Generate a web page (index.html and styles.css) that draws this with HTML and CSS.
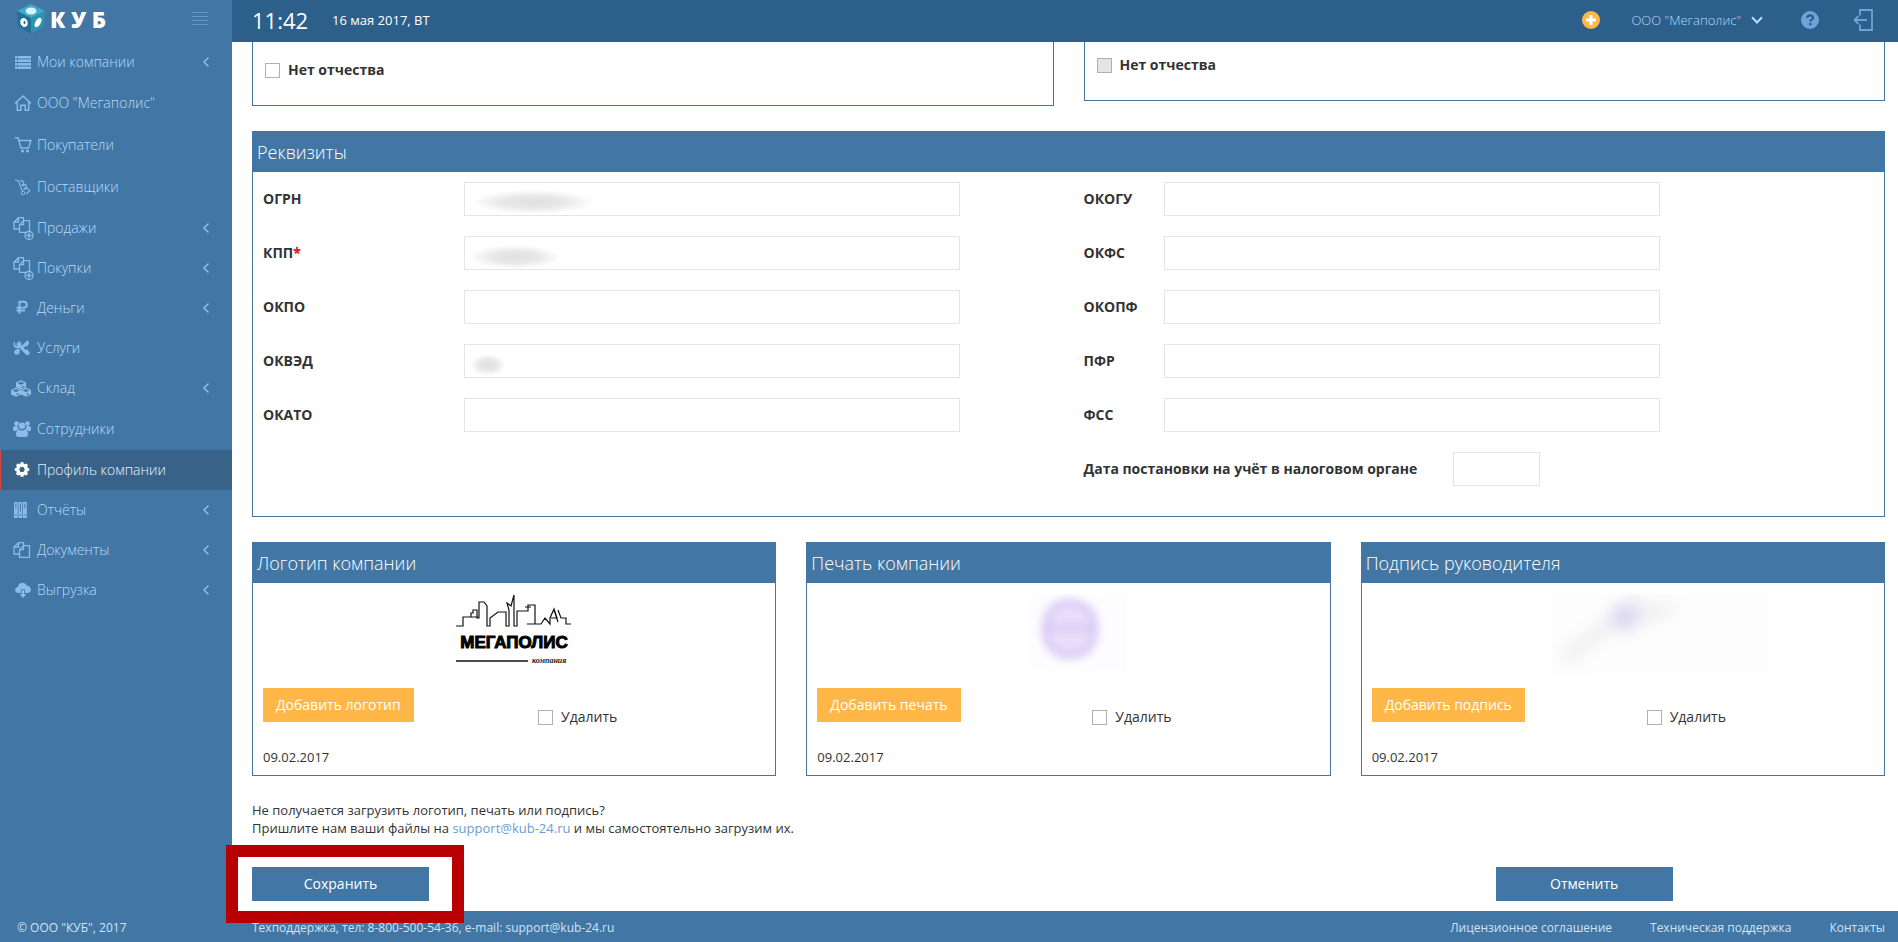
FILE: index.html
```html
<!DOCTYPE html>
<html lang="ru">
<head>
<meta charset="utf-8">
<title>КУБ — Профиль компании</title>
<link rel="stylesheet" href="styles.css">
</head>
<body>
<svg class="defs" aria-hidden="true">
  <symbol id="copy" viewBox="0 0 18 16"><path d="M5.500 4V.7h5V4M5.500.7 1 5v7h5M1 5h4.500V.7M10.500 3.700 6.500 7.700V15.300h10V3.700zM6.500 7.700h4V3.700" fill="none" stroke="currentColor" stroke-width="1.300"/></symbol>
  <symbol id="chev" viewBox="0 0 8 12"><path d="M6.500 1.500 2 6l4.500 4.500" fill="none" stroke="currentColor" stroke-width="1.600"/></symbol>
</svg>
<div class="page">
  <aside class="sidebar">
    <div class="brand">
      <svg class="cube" viewBox="0 0 28 30">
        <path d="M14 0 28 7 14 14 0 7z" fill="#3fa9c9"/><path d="M0 7l14 7v16L1 22z" fill="#226f94"/><path d="M28 7 14 14v16l13-8z" fill="#2d94ad"/>
        <ellipse cx="14" cy="7" rx="5.500" ry="3.500" fill="#d8f3fa"/><ellipse cx="7" cy="18.500" rx="3.600" ry="4.600" fill="#fff" transform="rotate(-20 7 18.500)"/><ellipse cx="7.500" cy="18.500" rx="1" ry="1.800" fill="#226f94"/><ellipse cx="21" cy="18.500" rx="2.600" ry="5.200" fill="#fff" transform="rotate(28 21 18.500)"/>
      </svg>
      <span class="brand-name">К У Б</span>
      <button class="burger" type="button" aria-label="Меню"><svg viewBox="0 0 16 14"><path d="M0 .5h16M0 4.500h16M0 8.500h16M0 12.500h16" stroke="currentColor"/></svg></button>
    </div>
    <nav class="menu">
      <a href="#"><svg viewBox="0 0 18 16"><path d="M2 2h2.500v2.500H2zM2 5.500h2.500V8H2zM2 9h2.500v2.500H2zM2 12.500h2.500V15H2zM5 2H18v2.500H5zM5 5.500H18V8H5zM5 9H18v2.500H5zM5 12.500H18V15H5z" fill="currentColor"/></svg><span>Мои компании</span><svg class="chev"><use href="#chev"/></svg></a>
      <a href="#" class="roomy"><svg viewBox="0 0 18 16"><path d="M2 8.500 10 1l8 7.500M4.300 7v8.300h3.500v-5h4.400v5h3.500V7" fill="none" stroke="currentColor" stroke-width="1.500"/></svg><span>ООО "Мегаполис"</span></a>
      <a href="#" class="roomy"><svg viewBox="0 0 18 16"><path d="M2 .8h3L8 11h7.500L18 3.500H6" fill="none" stroke="currentColor" stroke-width="1.400"/><circle cx="9.500" cy="14" r="1.600" fill="currentColor"/><circle cx="14.500" cy="14" r="1.600" fill="currentColor"/></svg><span>Покупатели</span></a>
      <a href="#" class="roomy"><svg viewBox="0 0 18 16"><path d="M2 .8l3.500 1.200L9.500 12.500M7 2.500l2.500-1 1.500 3.500-2.500 1M9.200 7l3.300-1.500 1.200 3-3 1.200M10.500 10.500l3.500-1.200 3 2.200-4 3.500" fill="none" stroke="currentColor" stroke-width="1.100"/><circle cx="10" cy="14" r="1.700" fill="none" stroke="currentColor"/></svg><span>Поставщики</span></a>
      <a href="#"><svg class="with-plus" viewBox="0 0 20 23"><use href="#copy" width="18" height="16"/><circle cx="16" cy="18.500" r="4" fill="#4276a4" stroke="currentColor" stroke-width="1.300"/><path d="M16 16v5M13.500 18.500h5" stroke="currentColor" stroke-width="1.500"/></svg><span>Продажи</span><svg class="chev"><use href="#chev"/></svg></a>
      <a href="#"><svg class="with-plus" viewBox="0 0 20 23"><use href="#copy" width="18" height="16"/><circle cx="16" cy="18.500" r="4" fill="#4276a4" stroke="currentColor" stroke-width="1.300"/><path d="M16 16v5M13.500 18.500h5" stroke="currentColor" stroke-width="1.500"/></svg><span>Покупки</span><svg class="chev"><use href="#chev"/></svg></a>
      <a href="#"><svg viewBox="0 0 18 16"><path d="M6.500 13.500V1.800h4c4.300 0 4.300 6 0 6H3.500M3.500 10.500h8.500" fill="none" stroke="currentColor" stroke-width="2"/></svg><span>Деньги</span><svg class="chev"><use href="#chev"/></svg></a>
      <a href="#"><svg viewBox="0 0 18 16"><path d="M5 4l8.500 9" stroke="currentColor" stroke-width="3" stroke-linecap="round"/><path d="M2 1.500v3.200l2 1.500 2.500-2L5.300 1a4 4 0 0 1 3 4.500L5.500 8A4 4 0 0 1 .5 3z" fill="currentColor"/><path d="M14.500 2 10 6.500M5.500 10 2.500 13" stroke="currentColor" stroke-width="2.600" stroke-linecap="round"/><circle cx="4" cy="12" r="2.600" fill="currentColor"/><path d="M11.500 4.500 14 1.200l2.300 1.700-2.500 4zM11 12l3-3 3 4-2.500 2.500z" fill="currentColor"/></svg><span>Услуги</span></a>
      <a href="#"><svg class="wide" viewBox="0 0 20 17"><g fill="currentColor"><path d="M10 .3 15 2.500v4.500l-5 2.500-5-2.500V2.500zM5 7.500l5 2.500v4.500l-5 2.200-5-2.200V10zM15 7.500l5 2.500v4.500l-5 2.200-5-2.200V10z"/></g><path d="M6.500 3.200 10 4.700l3.500-1.500L10 1.800zM1.500 10.500 5 12l3.500-1.500L5 9zM11.500 10.500 15 12l3.500-1.500L15 9zM10.800 5.800v2.200l3-1.300M5.800 13.200v2l3-1.300M15.800 13.200v2l3-1.300" fill="#4276a4"/></svg><span>Склад</span><svg class="chev"><use href="#chev"/></svg></a>
      <a href="#" class="roomy"><svg viewBox="0 0 18 16"><g fill="currentColor"><circle cx="3.500" cy="2.600" r="2.300"/><circle cx="14.500" cy="2.600" r="2.300"/><circle cx="9" cy="4.800" r="3.300"/><path d="M0 9V7c0-2 1.500-2.500 4.500-1.800C4.700 7 5.500 8 6 8.500 4.500 8.500 3.500 9 3 10H1zM18 9V7c0-2-1.500-2.500-4.500-1.800C13.300 7 12.500 8 12 8.500c1.500 0 2.500.5 3 1.500h2zM3 13.500c0-3 1-5 3-5 2 1.200 4 1.200 6 0 2 0 3 2 3 5 0 1.500-1 2.500-2 2.500H5c-1 0-2-1-2-2.500z"/></g></svg><span>Сотрудники</span></a>
      <a href="#" class="active"><svg viewBox="0 0 18 16"><circle cx="9" cy="7.500" r="4.200" fill="none" stroke="currentColor" stroke-width="3.400"/><path d="M9 .3v3M9 11.700v3M1.800 7.500h3M13.200 7.500h3M3.900 2.400 6 4.500M12 10.500l2.100 2.100M14.100 2.400 12 4.500M6 10.500l-2.100 2.100" stroke="currentColor" stroke-width="3.200"/><circle cx="9" cy="7.500" r="2.400" fill="#396289"/></svg><span>Профиль компании</span></a>
      <a href="#"><svg viewBox="0 0 18 16"><path d="M1 0h3.800v16H1zM5.500 0h3.800v16H5.500zM10 0h3.800v16H10z" fill="currentColor"/><path d="M2.900 1.500v5M7.400 1.500v8M11.900 1.500v5" stroke="#4276a4"/><circle cx="2.900" cy="13" r=".8" fill="#4276a4"/><circle cx="7.400" cy="13" r=".8" fill="#4276a4"/><circle cx="11.900" cy="13" r=".8" fill="#4276a4"/></svg><span>Отчёты</span><svg class="chev"><use href="#chev"/></svg></a>
      <a href="#"><svg><use href="#copy"/></svg><span>Документы</span><svg class="chev"><use href="#chev"/></svg></a>
      <a href="#"><svg viewBox="0 0 18 16"><path d="M6 11c-5 0-5-5.500-1.200-6C5.500-.2 12.500-.7 13.500 3.500c5-.2 6 7.200 1.500 7.500z" fill="currentColor"/><path d="M8.500 7.500h3V12H14l-4 4.500L6 12h2.500z" fill="currentColor" stroke="#4276a4" stroke-width=".8"/></svg><span>Выгрузка</span><svg class="chev"><use href="#chev"/></svg></a>
    </nav>
  </aside>

  <div class="column">
    <header class="topbar">
      <span class="clock">11:42</span>
      <span class="date">16 мая 2017, ВТ</span>
      <button class="plus" type="button" aria-label="Добавить"><svg viewBox="0 0 18 18"><circle cx="9" cy="9" r="9" fill="#ffb848"/><path d="M9 4v10M4 9h10" stroke="#fff" stroke-width="3"/></svg></button>
      <button class="account" type="button"><span>ООО "Мегаполис"</span><svg viewBox="0 0 12 8"><path d="M1 1.200 6 6.500l5-5.300" fill="none" stroke="currentColor" stroke-width="2"/></svg></button>
      <button class="help" type="button" aria-label="Помощь"><svg viewBox="0 0 18 18"><circle cx="9" cy="9" r="9" fill="currentColor"/><path d="M6 6.800C6.300 3.500 12 3.500 12 6.700c0 2-2.700 1.900-2.700 4" fill="none" stroke="#2c5f8a" stroke-width="2.200"/><path d="M8.100 12h2.400v2.300H8.100z" fill="#2c5f8a"/></svg></button>
      <button class="logout" type="button" aria-label="Выйти"><svg viewBox="0 0 20 22"><path d="M7 6.500V1h12v20H7v-5.500M1.500 11H14M5.500 7l-4 4 4 4" fill="none" stroke="currentColor" stroke-width="1.800"/></svg></button>
    </header>

    <main class="content">
      <div class="persons">
        <section class="person"><label class="check strong"><input type="checkbox">Нет отчества</label></section>
        <section class="person short"><label class="check strong"><input type="checkbox" disabled>Нет отчества</label></section>
      </div>

      <section class="panel">
        <h2>Реквизиты</h2>
        <div class="requisites">
          <div class="fields left">
            <label for="ogrn">ОГРН</label><input id="ogrn" class="masked long" type="text">
            <label for="kpp">КПП<b>*</b></label><input id="kpp" class="masked medium" type="text">
            <label for="okpo">ОКПО</label><input id="okpo" type="text">
            <label for="okved">ОКВЭД</label><input id="okved" class="masked tiny" type="text">
            <label for="okato">ОКАТО</label><input id="okato" type="text">
          </div>
          <div>
            <div class="fields right">
              <label for="okogu">ОКОГУ</label><input id="okogu" type="text">
              <label for="okfs">ОКФС</label><input id="okfs" type="text">
              <label for="okopf">ОКОПФ</label><input id="okopf" type="text">
              <label for="pfr">ПФР</label><input id="pfr" type="text">
              <label for="fss">ФСС</label><input id="fss" type="text">
            </div>
            <div class="taxdate"><label for="tax">Дата постановки на учёт в налоговом органе</label><input id="tax" type="text"></div>
          </div>
        </div>
      </section>

      <div class="cards">
        <section class="panel">
          <h2>Логотип компании</h2>
          <div class="media">
            <svg viewBox="0 0 118 72" width="118" height="72" role="img" aria-label="Мегаполис">
              <path d="M1 33h7v-9h8v-4h2v-3h4v8h2V9h5l3 4v20h3v-8l8-6h8v14h3V17l-2-7 4 3 3-11v31h3V18h11v-6h7v19h-8M70 14h6M77 31h9l4-6 5 6V25l4-9 3 9h-6M99 17l4 12M103 17l3 8h5v6h5M16 24h7" fill="none" stroke="#111" stroke-width="1.200"/>
              <text x="59" y="55" text-anchor="middle" class="logo-name">МЕГАПОЛИС</text>
              <path d="M1 68h72" stroke="#111" stroke-width="1.500"/>
              <text x="77" y="70" class="logo-sub">компания</text>
            </svg>
          </div>
          <div class="tools"><button class="add" type="button">Добавить логотип</button><label class="check"><input type="checkbox">Удалить</label></div>
          <p class="stamp-date">09.02.2017</p>
        </section>
        <section class="panel">
          <h2>Печать компании</h2>
          <div class="media">
            <svg viewBox="0 0 116 78" width="116" height="78" role="img" aria-label="Печать">
              <defs><filter id="soft" x="-40%" y="-40%" width="180%" height="180%"><feGaussianBlur stdDeviation="4"/></filter></defs>
              <path d="M19 2h97v76H19z" fill="#fdfcfe"/>
              <g filter="url(#soft)"><rect x="34" y="8" width="52" height="56" rx="24" fill="#e9dffa"/><rect x="36" y="10" width="48" height="52" rx="22" fill="none" stroke="#dacbf7" stroke-width="8"/><path d="M36 35h48" stroke="#d2c2f4" stroke-width="5"/></g>
            </svg>
          </div>
          <div class="tools"><button class="add" type="button">Добавить печать</button><label class="check"><input type="checkbox">Удалить</label></div>
          <p class="stamp-date">09.02.2017</p>
        </section>
        <section class="panel">
          <h2>Подпись руководителя</h2>
          <div class="media">
            <svg viewBox="0 0 290 80" width="290" height="80" role="img" aria-label="Подпись">
              <defs><filter id="softer" x="-50%" y="-50%" width="200%" height="200%"><feGaussianBlur stdDeviation="8"/></filter></defs>
              <path d="M74 2h216v78H74z" fill="#fdfdfd"/>
              <g filter="url(#softer)"><path d="M86 66 165 5M135 30l60-15" stroke="#efeff1" stroke-width="14"/><ellipse cx="147" cy="24" rx="14" ry="14" fill="#dcd6f3"/></g>
            </svg>
          </div>
          <div class="tools"><button class="add" type="button">Добавить подпись</button><label class="check"><input type="checkbox">Удалить</label></div>
          <p class="stamp-date">09.02.2017</p>
        </section>
      </div>

      <p class="note">Не получается загрузить логотип, печать или подпись?<br>Пришлите нам ваши файлы на <a href="mailto:support@kub-24.ru">support@kub-24.ru</a> и мы самостоятельно загрузим их.</p>

      <div class="actions">
        <div class="marked"><button class="primary" type="submit">Сохранить</button></div>
        <button class="primary" type="button">Отменить</button>
      </div>
    </main>
  </div>

  <footer class="footer">
    <span class="copyright">© ООО "КУБ", 2017</span>
    <span>Техподдержка, тел: 8-800-500-54-36, e-mail: support@kub-24.ru</span>
    <nav><a href="#">Лицензионное соглашение</a><a href="#">Техническая поддержка</a><a href="#">Контакты</a></nav>
  </footer>
</div>
</body>
</html>
```
FILE: styles.css
```css
* { box-sizing: border-box; }

body {
  margin: 0;
  font: 14px/20px "Open Sans", "Noto Sans", sans-serif;
  color: #333;
  background: #fff;
}

a { color: inherit; text-decoration: none; }
h2, p { margin: 0; }
button { margin: 0; padding: 0; border: 0; background: none; font: inherit; color: inherit; cursor: pointer; }
button svg { display: block; }
.defs { position: absolute; width: 0; height: 0; }

.page {
  display: grid;
  grid-template-columns: 232px minmax(0, 1fr);
  grid-template-rows: 1fr auto;
  min-height: 100vh;
}

/* Sidebar */
.sidebar { background: #4276a4; color: #b8dafa; }
.brand { display: flex; align-items: center; height: 42px; padding: 0 24px 5px 17px; }
.cube { width: 28px; height: 30px; margin-right: 5px; }
.brand-name { flex: 1; font-size: 22px; font-weight: 800; color: #fff; }
.burger svg { width: 16px; height: 14px; }
.burger { color: #6797c4; }

.menu a {
  display: flex;
  align-items: center;
  height: 40px;
  padding: 0 22px 0 13px;
  font-weight: 300;
}
.menu a.roomy { height: 42px; }
.menu span { flex: 1; padding-left: 6px; }
.menu svg { width: 18px; height: 16px; overflow: visible; color: #8cbce6; }
.menu svg.with-plus { width: 20px; height: 23px; margin-right: -2px; }
.menu svg.wide { width: 20px; height: 17px; margin-left: -2px; }
.menu svg.chev { width: 8px; height: 12px; }
.menu a.active { background: #396289; color: #e4f4ff; border-left: 1px solid #d84a3f; padding-left: 12px; }
.menu a.active svg { color: #fff; }

/* Top bar */
.column { display: flex; flex-direction: column; min-width: 0; }
.topbar {
  display: flex;
  align-items: center;
  height: 42px;
  padding: 0 25px 2px 20px;
  background: #2c5f8a;
  color: #fff;
}
.clock { font-size: 22px; width: 80px; }
.date { flex: 1; font-size: 13px; }
.plus svg, .help svg { width: 18px; height: 18px; }
.account { display: flex; align-items: center; gap: 10px; margin: 0 38px 0 31px; font-size: 13px; font-weight: 300; color: #b8dafa; }
.account svg { width: 12px; height: 8px; }
.help, .logout { color: #6fa3d8; }
.logout { margin-left: 34px; }
.logout svg { width: 20px; height: 22px; }

/* Content */
.content { padding: 0 13px 10px 20px; }

.persons { display: grid; grid-template-columns: 1fr 1fr; gap: 30px; align-items: start; margin-bottom: 25px; }
.person { height: 64px; padding: 18px 12px; border: 1px solid #4a7598; border-top: 0; }
.person.short { height: 59px; padding-top: 13px; }

.check { display: inline-flex; align-items: center; gap: 8px; }
.check.strong { font-weight: 700; }
.check input { appearance: none; width: 15px; height: 15px; margin: 0; border: 1px solid #b0b0b0; background: #fff; }
.check input:disabled { background: #e4e4e4; }

.panel { border: 1px solid #4a7598; border-top: 0; }
.panel h2 {
  margin: 0 -1px;
  padding: 9px 5px 8px;
  font-size: 18px;
  line-height: 24px;
  font-weight: 300;
  color: #fff;
  background: #4276a4;
}

.requisites { display: grid; grid-template-columns: 1fr 1fr; padding: 10px 0 30px; }
.fields { display: grid; row-gap: 20px; align-content: start; }
.fields.left { grid-template-columns: 201px 1fr; padding: 0 109px 0 10px; }
.fields.right { grid-template-columns: 80px 62%; padding-left: 15px; }
.fields label, .taxdate label { align-self: center; font-weight: 700; }
.fields b { color: #e02222; }
.requisites input { width: 100%; height: 34px; padding: 6px 12px; border: 1px solid #e5e5e5; font: inherit; background-color: #fff; }
.taxdate { display: flex; gap: 36px; margin-top: 20px; padding-left: 15px; }
.requisites .taxdate input { width: 87px; }

.masked { background-repeat: no-repeat; background-image: radial-gradient(closest-side, #e0e0e0, #e8e8e8 50%, #fff); }
.masked.long { background-position: 6px 7px; background-size: 124px 24px; }
.masked.medium { background-position: 4px 8px; background-size: 92px 24px; }
.masked.tiny { background-position: 5px 9px; background-size: 36px 22px; }

.cards { display: grid; grid-template-columns: repeat(3, 1fr); gap: 30px; margin: 25px 0; }
.media { display: flex; justify-content: center; height: 105px; padding-top: 10px; }
.logo-name { font: bold 17px "Liberation Sans Narrow", "Liberation Sans", sans-serif; fill: #000; stroke: #000; }
.logo-sub { font: italic bold 8px "Liberation Serif", serif; fill: #222; }
.tools { display: grid; grid-template-columns: 275px 1fr; height: 60px; padding-left: 10px; align-items: start; }
.tools .check { padding-top: 19px; }
.add { justify-self: start; height: 34px; padding: 0 13px; color: #fff; background: #ffb848; }
.stamp-date { padding: 0 10px 9px; font-size: 13px; line-height: 18px; }

.note { font-size: 13px; line-height: 18px; }
.note a { color: #6b9bd1; }

.actions { display: flex; justify-content: space-between; margin-top: 30px; padding-right: 13%; }
.primary { display: block; width: 177px; height: 34px; color: #fff; background: #4276a4; }
.marked { position: relative; }
.marked::after { content: ""; position: absolute; inset: -22px -35px -22px -26px; border: 12px solid #b80000; pointer-events: none; }

/* Footer */
.footer {
  grid-column: 1 / -1;
  display: flex;
  height: 31px;
  padding: 7px 13px 0 17px;
  font-size: 12px;
  color: #cfe4f7;
  background: #4276a4;
}
.copyright { width: 235px; }
.footer nav { display: flex; gap: 38px; margin-left: auto; }
```
